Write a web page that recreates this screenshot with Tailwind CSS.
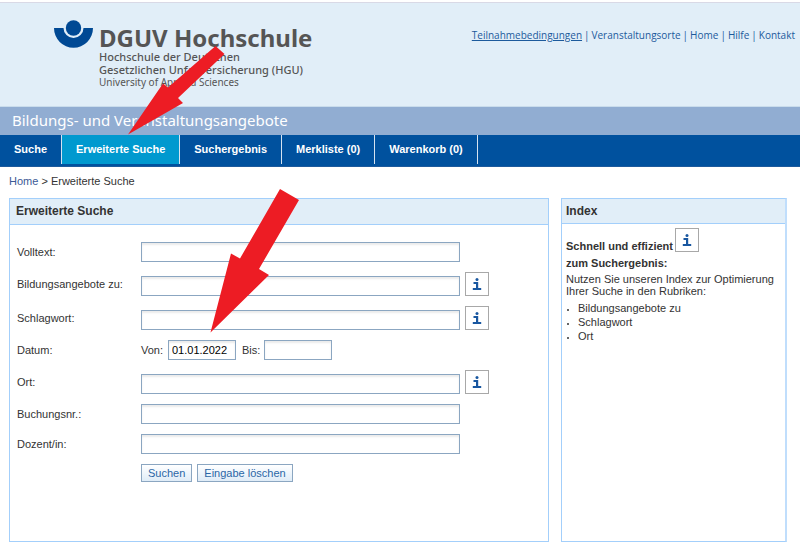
<!DOCTYPE html>
<html lang="de">
<head>
    <meta charset="UTF-8">
    <meta name="viewport" content="width=device-width, initial-scale=1.0">
    <title>DGUV Hochschule - Erweiterte Suche</title>
    <script src="https://cdn.jsdelivr.net/npm/@tailwindcss/browser@4"></script>
</head>
<body class="relative flex min-h-screen flex-col bg-white pt-0.5 font-['Liberation_Sans',Arial,sans-serif] text-[11px] text-[#333]">

    <header class="flex h-[105px] justify-between border-y border-t-[#d9d9e6] border-b-[#c9dcec] bg-[#e1eef8] pr-[5px] pl-[54px]">
        <div class="flex gap-1.5 pt-[17px]">
            <svg class="h-7 w-[39px] shrink-0" viewBox="0 0 39 28" aria-hidden="true">
                <path d="M0 8H9.500A10 10 0 0 0 29.500 8H39A19.500 19.700 0 0 1 0 8Z" fill="#004994"/>
                <circle cx="19.500" cy="8" r="7.700" fill="#004994"/>
            </svg>
            <div class="pt-1.5 font-['Noto_Sans',sans-serif] text-[11px] text-[#555]">
                <div class="text-[24px] leading-[24px] font-bold">DGUV Hochschule</div>
                <div class="leading-[13px] font-medium">Hochschule der Deutschen<br>Gesetzlichen Unfallversicherung (HGU)</div>
                <div class="text-[10px] leading-[13px]">University of Applied Sciences</div>
            </div>
        </div>
        <nav class="flex gap-0.5 pt-[25px] font-['Open_Sans',sans-serif] text-[10px] leading-[14px] whitespace-nowrap text-[#1c5a9c]">
            <a href="#" class="underline">Teilnahmebedingungen</a>
            <span>|</span>
            <a href="#">Veranstaltungsorte</a>
            <span>|</span>
            <a href="#">Home</a>
            <span>|</span>
            <a href="#">Hilfe</a>
            <span>|</span>
            <a href="#">Kontakt</a>
        </nav>
    </header>

    <h1 class="h-7 bg-[#91add2] pl-3 font-['Noto_Sans',sans-serif] text-[15px] leading-[26px] text-white">Bildungs- und Veranstaltungsangebote</h1>

    <nav class="flex h-8 border-b border-[#1d5a9c] bg-[#00519e] leading-[28px] font-bold text-white">
        <a href="#" class="h-[29px] border-r border-[#d5e2f0] px-3.5">Suche</a>
        <a href="#" class="h-[29px] border-r border-[#d5e2f0] bg-[#0099cf] px-3.5">Erweiterte Suche</a>
        <a href="#" class="h-[29px] border-r border-[#d5e2f0] px-3.5">Suchergebnis</a>
        <a href="#" class="h-[29px] border-r border-[#d5e2f0] px-3.5">Merkliste (0)</a>
        <a href="#" class="h-[29px] border-r border-[#d5e2f0] px-3.5">Warenkorb (0)</a>
    </nav>

    <div class="h-[31px] pt-[7px] pl-[9px] leading-[14px]"><a href="#" class="text-[#3c5a96]">Home</a> &gt; Erweiterte Suche</div>

    <main class="flex flex-1 gap-3 pr-[13px] pl-[9px]">
        <section class="flex-1 border border-[#a3cffb]">
            <h2 class="h-[26px] border-b border-[#a3cffb] bg-[#e1eef8] pl-1.5 text-[12px] leading-[25px] font-bold">Erweiterte Suche</h2>
            <form class="flex flex-col gap-2.5 pt-[17px] pl-[7px]">
                <div class="flex h-5 items-center">
                    <label for="volltext" class="w-[124px]">Volltext:</label>
                    <input id="volltext" type="text" class="h-5 w-[319px] border border-[#8ba6c1] px-1 shadow-[inset_0_2px_2px_#ebebeb]">
                </div>
                <div class="flex h-6 items-end">
                    <label for="angebote" class="w-[124px] self-center">Bildungsangebote zu:</label>
                    <input id="angebote" type="text" class="mr-[5px] h-5 w-[319px] border border-[#8ba6c1] px-1 shadow-[inset_0_2px_2px_#ebebeb]">
                    <button type="button" aria-label="Index Bildungsangebote" class="flex size-6 items-center justify-center border border-[#a8a8a8]">
                        <svg class="h-3 w-2.5" viewBox="0 0 10 12" aria-hidden="true"><circle cx="5" cy="1.500" r="1.500" fill="#1957a0"/><path d="M1.500 4H6.200V10H9.200V12H.8V10H4V6H1.500Z" fill="#1957a0"/></svg>
                    </button>
                </div>
                <div class="flex h-6 items-end">
                    <label for="schlagwort" class="w-[124px] self-center">Schlagwort:</label>
                    <input id="schlagwort" type="text" class="mr-[5px] h-5 w-[319px] border border-[#8ba6c1] px-1 shadow-[inset_0_2px_2px_#ebebeb]">
                    <button type="button" aria-label="Index Schlagwort" class="flex size-6 items-center justify-center border border-[#a8a8a8]">
                        <svg class="h-3 w-2.5" viewBox="0 0 10 12" aria-hidden="true"><circle cx="5" cy="1.500" r="1.500" fill="#1957a0"/><path d="M1.500 4H6.200V10H9.200V12H.8V10H4V6H1.500Z" fill="#1957a0"/></svg>
                    </button>
                </div>
                <div class="flex h-5 items-center">
                    <span class="w-[124px]">Datum:</span>
                    <label for="von" class="w-[27px]">Von:</label>
                    <input id="von" type="text" value="01.01.2022" class="mr-1.5 h-5 w-[68px] border border-[#8ba6c1] px-[3px] text-black shadow-[inset_0_2px_2px_#ebebeb]">
                    <label for="bis" class="w-[22px]">Bis:</label>
                    <input id="bis" type="text" class="h-5 w-[68px] border border-[#8ba6c1] px-[3px] shadow-[inset_0_2px_2px_#ebebeb]">
                </div>
                <div class="flex h-6 items-end">
                    <label for="ort" class="w-[124px] self-center">Ort:</label>
                    <input id="ort" type="text" class="mr-[5px] h-5 w-[319px] border border-[#8ba6c1] px-1 shadow-[inset_0_2px_2px_#ebebeb]">
                    <button type="button" aria-label="Index Ort" class="flex size-6 items-center justify-center border border-[#a8a8a8]">
                        <svg class="h-3 w-2.5" viewBox="0 0 10 12" aria-hidden="true"><circle cx="5" cy="1.500" r="1.500" fill="#1957a0"/><path d="M1.500 4H6.200V10H9.200V12H.8V10H4V6H1.500Z" fill="#1957a0"/></svg>
                    </button>
                </div>
                <div class="flex h-5 items-center">
                    <label for="buchungsnr" class="w-[124px]">Buchungsnr.:</label>
                    <input id="buchungsnr" type="text" class="h-5 w-[319px] border border-[#8ba6c1] px-1 shadow-[inset_0_2px_2px_#ebebeb]">
                </div>
                <div class="flex h-5 items-center">
                    <label for="dozent" class="w-[124px]">Dozent/in:</label>
                    <input id="dozent" type="text" class="h-5 w-[319px] border border-[#8ba6c1] px-1 shadow-[inset_0_2px_2px_#ebebeb]">
                </div>
                <div class="flex gap-[5px] pl-[124px] leading-[16px] text-[#2b66a6]">
                    <button type="submit" class="border border-[#8ba6c1] bg-linear-to-b from-white to-[#dfecf7] px-1.5">Suchen</button>
                    <button type="reset" class="border border-[#8ba6c1] bg-linear-to-b from-white to-[#dfecf7] px-1.5">Eingabe löschen</button>
                </div>
            </form>
        </section>

        <aside class="w-[226px] border border-r-2 border-[#a3cffb] border-r-[#c0defc]">
            <h2 class="h-[25px] border-b border-[#a3cffb] bg-[#e1eef8] pl-1 text-[12px] leading-[24px] font-bold">Index</h2>
            <div class="pt-1 pl-1">
                <div class="flex gap-0.5 font-bold">
                    <span class="pt-3 leading-[12px]">Schnell und effizient</span>
                    <button type="button" aria-label="Index" class="flex size-6 items-center justify-center border border-[#a8a8a8]">
                        <svg class="h-3 w-2.5" viewBox="0 0 10 12" aria-hidden="true"><circle cx="5" cy="1.500" r="1.500" fill="#1957a0"/><path d="M1.500 4H6.200V10H9.200V12H.8V10H4V6H1.500Z" fill="#1957a0"/></svg>
                    </button>
                </div>
                <p class="pt-[5px] leading-[12px] font-bold">zum Suchergebnis:</p>
                <p class="pt-1 leading-[12px]">Nutzen Sie unseren Index zur Optimierung<br>Ihrer Suche in den Rubriken:</p>
                <ul class="list-disc pt-1 pl-3 leading-[14px] marker:text-[8px]">
                    <li>Bildungsangebote zu</li>
                    <li>Schlagwort</li>
                    <li>Ort</li>
                </ul>
            </div>
        </aside>
    </main>

    <!-- Hinweispfeile -->
    <svg class="pointer-events-none absolute top-[46px] left-[128px] h-[89px] w-[97px]" viewBox="128 46 97 89" aria-hidden="true">
        <path d="M128 134.500L163 83.500L168 87.500L215.500 46L224.500 54L178 98L183 103Z" fill="#ed1c24"/>
    </svg>
    <svg class="pointer-events-none absolute top-[189px] left-[210px] h-[144px] w-[90px]" viewBox="210 189 90 144" aria-hidden="true">
        <path d="M210.500 332.500L231 253.500L240 258.500L280 189L299 200L259 269L269 275Z" fill="#ed1c24"/>
    </svg>
</body>
</html>
